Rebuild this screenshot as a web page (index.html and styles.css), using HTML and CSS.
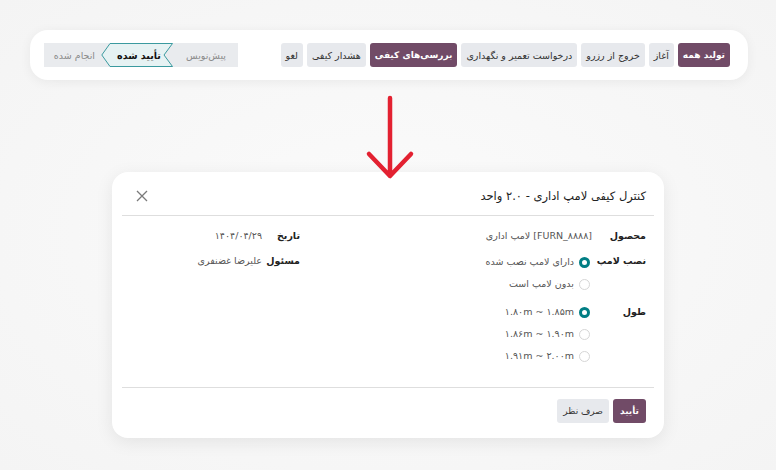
FILE: index.html
```html
<!DOCTYPE html>
<html lang="fa" dir="rtl">
<head>
<meta charset="utf-8">
<link rel="stylesheet" href="styles.css">
</head>
<body>
<div class="page">
  <div class="toolbar">
    <div class="actions">
      <span class="btn primary">تولید همه</span>
      <span class="btn">آغاز</span>
      <span class="btn">خروج از رزرو</span>
      <span class="btn">درخواست تعمیر و نگهداری</span>
      <span class="btn primary">بررسی‌های کیفی</span>
      <span class="btn">هشدار کیفی</span>
      <span class="btn">لغو</span>
    </div>
    <div class="status">
      <span class="step first">پیش‌نویس</span>
      <span class="step active">
        <svg class="shape" width="72" height="24" viewBox="0 0 72 24"><path d="M9 0.5 L71.5 0.5 L63 12 L71.5 23.5 L9 23.5 L0.8 12 Z" fill="#e6f2f3" stroke="#3a9a9f" stroke-width="1"/></svg>
        <span class="txt">تأیید شده</span>
      </span>
      <span class="step last">انجام شده</span>
    </div>
  </div>

  <svg class="arrow" width="60" height="90" viewBox="0 0 60 90">
    <path d="M30 4 L30 82 M9 60 L30 82 L51 60" fill="none" stroke="#e32131" stroke-width="4.5" stroke-linecap="round" stroke-linejoin="round"/>
  </svg>

  <div class="dialog">
    <div class="dlg-head">
      <div class="dlg-title">کنترل کیفی لامپ اداری - ۲.۰ واحد</div>
      <svg class="close" width="12" height="12" viewBox="0 0 12 12"><path d="M1 1 L11 11 M11 1 L1 11" stroke="#7a7a7a" stroke-width="1.3"/></svg>
    </div>
    <div class="dlg-body">
      <div class="group right">
        <div class="row"><span class="lbl">محصول</span><span class="val">[FURN_۸۸۸۸] لامپ اداری</span></div>
        <div class="row"><span class="lbl">نصب لامپ</span>
          <div class="radios">
            <label class="opt"><span class="radio on"></span>دارای لامپ نصب شده</label>
            <label class="opt"><span class="radio"></span>بدون لامپ است</label>
          </div>
        </div>
        <div class="row len"><span class="lbl">طول</span>
          <div class="radios">
            <label class="opt"><span class="radio on"></span>۱.۸۰m ~ ۱.۸۵m</label>
            <label class="opt"><span class="radio"></span>۱.۸۶m ~ ۱.۹۰m</label>
            <label class="opt"><span class="radio"></span>۱.۹۱m ~ ۲.۰۰m</label>
          </div>
        </div>
      </div>
      <div class="group left">
        <div class="row"><span class="lbl">تاریخ</span><span class="val">۱۴۰۴/۰۴/۲۹</span></div>
        <div class="row"><span class="lbl">مسئول</span><span class="val">علیرضا غضنفری</span></div>
      </div>
    </div>
    <div class="dlg-foot">
      <span class="btn primary ok">تأیید</span>
      <span class="btn cancel">صرف نظر</span>
    </div>
  </div>
</div>
</body>
</html>
```

FILE: styles.css
```css
* { box-sizing: border-box; }
html, body { margin: 0; padding: 0; }
body {
  background: #f7f7f7;
  font-family: "DejaVu Sans", "Noto Sans", sans-serif;
  color: #222;
  width: 776px;
  height: 470px;
  overflow: hidden;
}
.page {
  position: relative;
  padding-top: 30px;
  width: 776px;
  height: 470px;
  background: radial-gradient(ellipse at center, #fbfbfb 0%, #f4f4f4 100%);
}
.toolbar {
  margin: 0 28px 0 30px;
  height: 50px;
  background: #fff;
  border-radius: 18px;
  box-shadow: 0 2px 12px rgba(0,0,0,0.06);
  display: flex;
  align-items: center;
  justify-content: space-between;
  padding: 0 18px 0 14px;
}
.actions { display: flex; gap: 4px; }
.btn {
  display: inline-flex;
  align-items: center;
  height: 24px;
  padding: 0 5px;
  border-radius: 3px;
  background: #e7e9ed;
  color: #333;
  font-size: 9.5px;
  white-space: nowrap;
}
.btn.primary {
  background: #714b67;
  color: #fff;
  font-weight: bold;
  font-size: 9px;
}
.status {
  display: flex;
  height: 24px;
  background: #e9ebee;
  align-items: center;
  width: 194px;
}
.step {
  position: relative;
  font-size: 9.5px;
  color: #8a8a8a;
  height: 24px;
  display: flex;
  align-items: center;
}
.step.first { width: 65px; padding-right: 12px; }
.step.active {
  width: 72px;
  margin-left: 2px;
  color: #111;
  font-weight: bold;
  justify-content: center;
}
.step.active .shape { position: absolute; right: 0; top: 0; }
.step.active .txt { position: relative; padding-left: 4px; }
.step.last { padding-right: 4px; }
.arrow {
  position: absolute;
  left: 360px;
  top: 94px;
  z-index: 5;
}
.dialog {
  margin: 92px 112px 0 112px;
  width: 552px;
  height: 266px;
  background: #fff;
  border-radius: 16px;
  box-shadow: 0 4px 18px rgba(0,0,0,0.08);
  padding: 0 10px;
  display: flex;
  flex-direction: column;
}
.dlg-head {
  height: 44px;
  border-bottom: 1px solid #dedede;
  display: flex;
  align-items: center;
  justify-content: space-between;
  padding: 4px 8px 0 14px;
}
.dlg-title { font-size: 11.5px; color: #222; }
.dlg-body {
  flex: 1;
  display: grid;
  grid-template-columns: 346px 1fr;
  padding: 12px 8px 0 0;
  border-bottom: 1px solid #dedede;
}
.row { display: flex; align-items: flex-start; margin-bottom: 9px; }
.lbl {
  font-size: 9.5px;
  font-weight: bold;
  color: #222;
  line-height: 16px;
}
.right .lbl { width: 54px; }
.left .lbl { width: 38px; }
.val { font-size: 9.5px; color: #555; line-height: 16px; }
.radios { display: flex; flex-direction: column; gap: 6px; margin-right: 2px; margin-top: 1px; }
.row.len { margin-top: 12px; }
.row.len .radios { margin-top: 0; gap: 6px; }
.opt {
  display: flex;
  align-items: center;
  gap: 5px;
  font-size: 9.5px;
  color: #555;
  line-height: 16px;
}
.radio {
  width: 11px;
  height: 11px;
  border-radius: 50%;
  border: 1px solid #d6d6d6;
  background: #fff;
  display: inline-block;
  flex: none;
}
.radio.on { border: 3px solid #017e84; }
.dlg-foot {
  height: 50px;
  display: flex;
  align-items: center;
  gap: 4px;
  padding: 0 8px 4px 0;
}
.ok { height: 24px; padding: 0 7px; font-weight: normal; font-size: 10px; }
.cancel { height: 24px; padding: 0 6px; font-size: 9px; }
```
